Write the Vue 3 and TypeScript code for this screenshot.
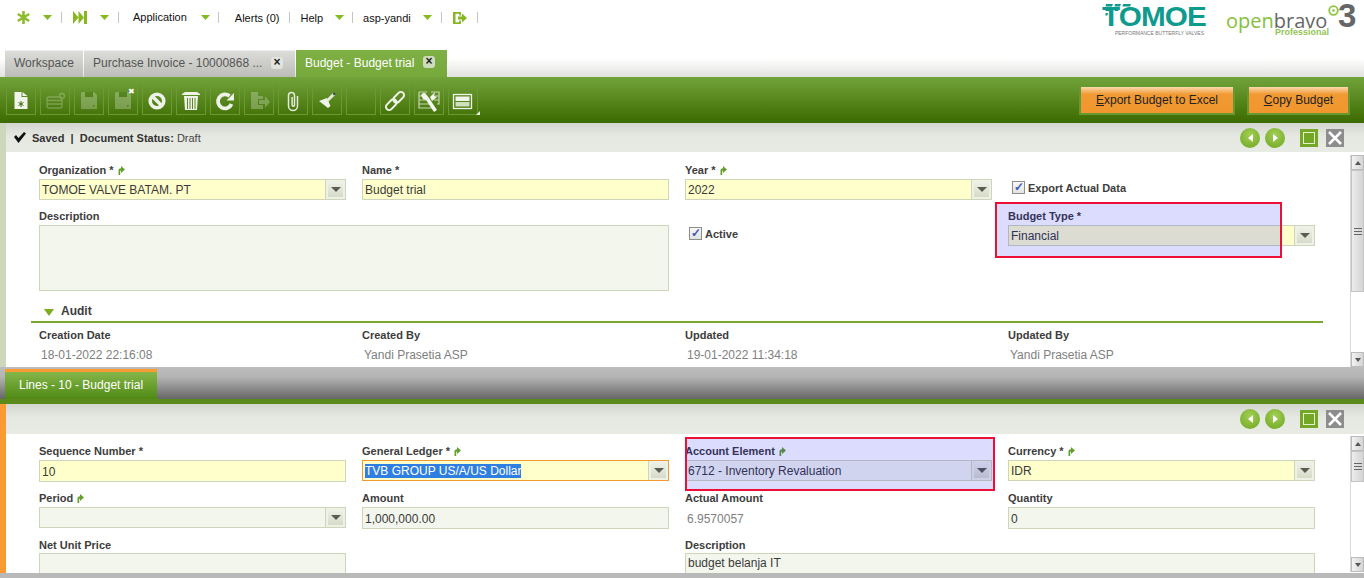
<script setup lang="ts">
interface Field {
  label?: string
  link?: boolean
  value?: string
  kind: 'text' | 'combo' | 'area' | 'plain' | 'check' | 'empty'
  yellow?: boolean
  focus?: boolean
  cls?: string
}

const navCaret = 'M0 0h9l-4.500 5z'
const jumpIcon = 'M0.500 9V4.500C0.500 3 1.700 2.200 3 2.200V0l4 3.500-4 3.500V4.600c-.5 0-.8.4-.8.9V9z'

const tools = [
  { id: 'new', off: false },
  { id: 'newrow', off: true },
  { id: 'save', off: true },
  { id: 'saveclose', off: true },
  { id: 'undo', off: false },
  { id: 'trash', off: false },
  { id: 'refresh', off: false },
  { id: 'export', off: true },
  { id: 'clip', off: false },
  { id: 'stamp', off: false },
  { id: 'blank', off: false },
  { id: 'link', off: false },
  { id: 'tools', off: false },
  { id: 'layout', off: false },
]

const headerFields: Field[] = [
  { label: 'Organization *', link: true, value: 'TOMOE VALVE BATAM. PT', kind: 'combo', yellow: true },
  { label: 'Name *', value: 'Budget trial', kind: 'text', yellow: true },
  { label: 'Year *', link: true, value: '2022', kind: 'combo', yellow: true },
  { label: 'Export Actual Data', kind: 'check' },
  { label: 'Description', kind: 'area', cls: 'span-wide span-tall' },
  { label: 'Active', kind: 'check' },
  { label: 'Budget Type *', value: 'Financial', kind: 'combo', yellow: true },
]

const auditFields: Field[] = [
  { label: 'Creation Date', value: '18-01-2022 22:16:08', kind: 'plain' },
  { label: 'Created By', value: 'Yandi Prasetia ASP', kind: 'plain' },
  { label: 'Updated', value: '19-01-2022 11:34:18', kind: 'plain' },
  { label: 'Updated By', value: 'Yandi Prasetia ASP', kind: 'plain' },
]

const lineFields: Field[] = [
  { label: 'Sequence Number *', value: '10', kind: 'text', yellow: true },
  { label: 'General Ledger *', link: true, value: 'TVB GROUP US/A/US Dollar', kind: 'combo', yellow: true, focus: true },
  { label: 'Account Element', link: true, value: '6712 - Inventory Revaluation', kind: 'combo' },
  { label: 'Currency *', link: true, value: 'IDR', kind: 'combo', yellow: true },
  { label: 'Period', link: true, kind: 'combo' },
  { label: 'Amount', value: '1,000,000.00', kind: 'text' },
  { label: 'Actual Amount', value: '6.9570057', kind: 'plain' },
  { label: 'Quantity', value: '0', kind: 'text' },
  { label: 'Net Unit Price', kind: 'text', cls: 'tight' },
  { kind: 'empty' },
  { label: 'Description', value: 'budget belanja IT', kind: 'text', cls: 'span-wide tight' },
]
</script>

<template>
  <div class="app">
    <header class="top">
      <nav class="nav">
        <svg class="nav-ic" width="13" height="13" viewBox="0 0 13 13"><path d="M6.500 0v13M0.800 3l11.400 7M12.200 3L0.800 10" stroke="#8dbb2c" stroke-width="2.600" fill="none" /></svg>
        <svg class="caret" style="margin-left: 13px" width="9" height="5" viewBox="0 0 9 5"><path :d="navCaret" /></svg>
        <i class="sep" style="margin-left: 9px"></i>
        <svg class="nav-ic" style="margin-left: 11px" width="14" height="13" viewBox="0 0 14 13"><path d="M0 0l5.500 6.500L0 13zM5.500 0l5.500 6.500L5.500 13zM11 0h3v13h-3z" fill="#86b820" /></svg>
        <svg class="caret" style="margin-left: 13px" width="9" height="5" viewBox="0 0 9 5"><path :d="navCaret" /></svg>
        <i class="sep" style="margin-left: 9px"></i>
        <span class="nav-txt app-txt" style="margin-left: 14px">Application</span>
        <svg class="caret" style="margin-left: 14px" width="9" height="5" viewBox="0 0 9 5"><path :d="navCaret" /></svg>
        <i class="sep" style="margin-left: 8px"></i>
        <span class="nav-txt" style="margin-left: 16px">Alerts (0)</span>
        <i class="sep" style="margin-left: 10px"></i>
        <span class="nav-txt" style="margin-left: 10px">Help</span>
        <svg class="caret" style="margin-left: 12px" width="9" height="5" viewBox="0 0 9 5"><path :d="navCaret" /></svg>
        <i class="sep" style="margin-left: 8px"></i>
        <span class="nav-txt" style="margin-left: 10px">asp-yandi</span>
        <svg class="caret" style="margin-left: 12px" width="9" height="5" viewBox="0 0 9 5"><path :d="navCaret" /></svg>
        <i class="sep" style="margin-left: 9px"></i>
        <svg class="nav-ic" style="margin-left: 11px" width="14" height="12" viewBox="0 0 14 12"><path d="M0 0h8v3.500H6.200V1.800H2.500v8.400h3.700V8.500H8V12H0zM5 4.500h4V1.500L14 6 9 10.500V7.500H5z" fill="#86b820" /></svg>
        <i class="sep" style="margin-left: 10px"></i>

        <div class="logos">
          <div class="tomoe">
            <svg class="leaves" width="26" height="12" viewBox="0 0 26 12"><path d="M1 0h7l-1 2.500H0.500zM10 0h6l-1 2.500h-5.500zM18 0h8l-1 2.500h-7.500zM0.500 4.500h5l-1 2.500H0.500zM10 4.500h4l-1 2.500H9.500zM0.500 9h2.500l-.5 2.500h-2z" fill="#0f9a8e" /></svg>
            <span class="tomoe-name">TOMOE</span>
            <span class="tomoe-sub">PERFORMANCE BUTTERFLY VALVES</span>
          </div>
          <div class="obravo">
            <div class="ob-name"><span class="ob-open">open</span><span class="ob-bravo">bravo</span></div>
            <span class="ob-sub">Professional</span>
          </div>
          <div class="ob-three">
            <svg width="11" height="11" viewBox="0 0 11 11"><circle cx="5.500" cy="5.500" r="4.300" fill="none" stroke="#8cc63f" stroke-width="1.800" /><circle cx="5.500" cy="5.500" r="1.300" fill="#8cc63f" /></svg>
            <span>3</span>
          </div>
        </div>
      </nav>

      <div class="tabs">
        <div class="tab" style="width: 78px">Workspace</div>
        <div class="tab" style="width: 211px">
          Purchase Invoice - 10000868 ...
          <span class="tab-x">×</span>
        </div>
        <div class="tab tab-on" style="width: 151px">
          Budget - Budget trial
          <span class="tab-x">×</span>
        </div>
      </div>
    </header>

    <div class="toolbar">
      <div v-for="t in tools" :key="t.id" class="tool" :class="{ off: t.off }">
        <svg width="24" height="24" viewBox="0 0 24 24">
          <g v-if="t.id === 'new'">
            <path d="M5.500 3h7v5h6v12h-13z" fill="#f0f4ea" />
            <path d="M13.500 3l5 4h-5z" fill="#f0f4ea" />
            <path d="M12 12v6M9.500 13.500l5 3M14.500 13.500l-5 3" stroke="#3f6e10" stroke-width="1" />
          </g>
          <g v-else-if="t.id === 'newrow'" fill="none" stroke="#e8efdf" stroke-width="1.300">
            <rect x="4" y="8" width="15" height="11" rx="2" />
            <path d="M4 11.500h15M4 15h15" />
            <circle cx="19" cy="7" r="2.500" />
          </g>
          <g v-else-if="t.id === 'save' || t.id === 'saveclose'">
            <path d="M5 3h12l3 3v14H4V4z" fill="#f0f4ea" />
            <rect x="8" y="3" width="8" height="5" fill="#3f6e10" />
            <rect x="16" y="16" width="1.500" height="1.500" fill="#3f6e10" />
          </g>
          <g v-else-if="t.id === 'undo'">
            <circle cx="12" cy="12" r="6.800" fill="none" stroke="#eef2e8" stroke-width="3.600" />
            <path d="M7 7l10 10" stroke="#eef2e8" stroke-width="3.600" />
          </g>
          <g v-else-if="t.id === 'trash'">
            <path d="M3 5l3-2h12l3 2v1H3z" fill="#eef2e8" />
            <path d="M5 7h14l-1 14H6z" fill="#eef2e8" />
            <path d="M8.500 9v11M11 9v11M13.500 9v11M16 9v11" stroke="#5a8a22" stroke-width="1" />
          </g>
          <g v-else-if="t.id === 'refresh'">
            <path d="M18.500 15a7 7 0 1 1-2-8" fill="none" stroke="#eef2e8" stroke-width="3.800" />
            <path d="M13.500 11.500H21V4z" fill="#eef2e8" />
          </g>
          <g v-else-if="t.id === 'export'" fill="#f0f4ea">
            <path d="M4 3h7v4h5v3h-5v6h5v4H4z" />
            <path d="M12 11h6V7l5 6-5 6v-4h-6z" />
          </g>
          <g v-else-if="t.id === 'clip'">
            <path d="M16.500 7v10a4.500 4.500 0 0 1-9 0V6.500a3 3 0 0 1 6 0V16a1.200 1.200 0 0 1-2.400 0V8" fill="none" stroke="#e4ebda" stroke-width="1.500" />
          </g>
          <g v-else-if="t.id === 'stamp'">
            <path d="M4 12l8-3 3.500 8-2.500 2z" fill="#f0f4ea" />
            <path d="M12 12l7-7" stroke="#e4ebda" stroke-width="3" />
            <path d="M17.500 5l2-1.500 1 1-1.500 2z" fill="#2c3f78" />
          </g>
          <g v-else-if="t.id === 'link'" fill="none" stroke="#eef2e8" stroke-width="2" transform="rotate(-45 12 12)">
            <rect x="0.500" y="8.800" width="12.500" height="6.400" rx="3.200" />
            <rect x="11" y="8.800" width="12.500" height="6.400" rx="3.200" />
          </g>
          <g v-else-if="t.id === 'tools'">
            <path d="M2 3h8M14 3h8v4h-5M8 7H2V3M2 7v4h9M2 11v4h11M2 15v4h14M17 11h5v4h-2M22 7v4" fill="none" stroke="#c6d6b2" stroke-width="1.200" />
            <path d="M8 4l4 5 8 12-3 2-8-12-3-1-2-4 2-2z" fill="#f4f7ef" />
            <path d="M13 8l5-5-1 4 3 1-5 4z" fill="#f4f7ef" />
          </g>
          <g v-else-if="t.id === 'layout'">
            <rect x="2.500" y="5.500" width="18" height="14" fill="none" stroke="#f0f4ea" stroke-width="1.300" />
            <rect x="4.500" y="7.500" width="14" height="4.500" fill="#f0f4ea" />
            <rect x="4.500" y="13" width="14" height="4.500" fill="#cfe0bb" />
          </g>
        </svg>
        <span v-if="t.id === 'saveclose'" class="tool-x">✖</span>
        <i v-if="t.id === 'layout'" class="tool-corner"></i>
      </div>
      <div class="actions">
        <button class="act" style="width: 156px"><u>E</u>xport Budget to Excel</button>
        <button class="act" style="width: 103px"><u>C</u>opy Budget</button>
      </div>
    </div>

    <section class="pane pane-top">
      <div class="status">
        <svg width="12" height="11" viewBox="0 0 12 11"><path d="M0 5l2-2 2.500 3L10 0l2 1.500L4.500 11z" fill="#111" /></svg>
        <span class="status-txt"><b>Saved&nbsp; |&nbsp; Document Status:</b> Draft</span>
        <div class="controls">
          <span class="round"><i class="tri-l"></i></span>
          <span class="round"><i class="tri-r"></i></span>
          <span class="max"></span>
          <span class="close">
            <svg width="18" height="18" viewBox="0 0 18 18"><path d="M3 3l12 12M15 3L3 15" stroke="#fff" stroke-width="2.500" /></svg>
          </span>
        </div>
      </div>
      <div class="body">
        <div class="form">
          <div class="grid grid-head">
            <div v-for="f in headerFields" :key="f.label" class="field" :class="f.cls">
              <label v-if="f.kind === 'check'" class="chk"><span class="box">✓</span>{{ f.label }}</label>
              <template v-else>
                <label class="lbl">{{ f.label }}<svg v-if="f.link" class="jump" width="7" height="9" viewBox="0 0 7 9"><path :d="jumpIcon" /></svg></label>
                <div class="inp" :class="{ yellow: f.yellow, 'inp-area': f.kind === 'area' }">
                  <span class="val">{{ f.value }}</span>
                  <span v-if="f.kind === 'combo'" class="drop"><i></i></span>
                </div>
              </template>
            </div>
          </div>
          <div class="audit">
            <div class="audit-head"><i></i>Audit</div>
            <div class="grid grid-audit">
              <div v-for="f in auditFields" :key="f.label" class="field">
                <label class="lbl">{{ f.label }}</label>
                <span class="plain">{{ f.value }}</span>
              </div>
            </div>
          </div>
        </div>
        <div class="scroll">
          <span class="sb-btn"><i class="up"></i></span>
          <span class="sb-thumb" style="height: 122px"><b></b></span>
          <span class="sb-fill"></span>
          <span class="sb-btn"><i class="down"></i></span>
        </div>
      </div>
      <div class="mark mark-a"></div>
    </section>

    <div class="divider">
      <div class="sub-tab">Lines - 10 - Budget trial</div>
    </div>

    <section class="pane pane-low">
      <div class="status status-low">
        <div class="controls">
          <span class="round"><i class="tri-l"></i></span>
          <span class="round"><i class="tri-r"></i></span>
          <span class="max"></span>
          <span class="close">
            <svg width="18" height="18" viewBox="0 0 18 18"><path d="M3 3l12 12M15 3L3 15" stroke="#fff" stroke-width="2.500" /></svg>
          </span>
        </div>
      </div>
      <div class="body">
        <div class="form">
          <div class="grid grid-lines">
            <div v-for="(f, i) in lineFields" :key="i" class="field" :class="[f.cls, `kind-${f.kind}`]">
              <template v-if="f.kind !== 'empty'">
                <label class="lbl">{{ f.label }}<svg v-if="f.link" class="jump" width="7" height="9" viewBox="0 0 7 9"><path :d="jumpIcon" /></svg></label>
                <span v-if="f.kind === 'plain'" class="plain plain-line">{{ f.value }}</span>
                <div v-else class="inp" :class="{ yellow: f.yellow, focus: f.focus }">
                  <span class="val"><span :class="{ sel: f.focus }">{{ f.value }}</span></span>
                  <span v-if="f.kind === 'combo'" class="drop"><i></i></span>
                </div>
              </template>
            </div>
          </div>
        </div>
        <div class="scroll">
          <span class="sb-btn"><i class="up"></i></span>
          <span class="sb-thumb" style="height: 31px"><b></b></span>
          <span class="sb-fill"></span>
          <span class="sb-btn"><i class="down"></i></span>
        </div>
      </div>
      <div class="mark mark-b"></div>
    </section>

    <div class="foot"></div>
  </div>
</template>

<style>
html,
body {
  margin: 0;
  overflow: hidden;
}
</style>

<style scoped>
.app {
  width: 1364px;
  height: 578px;
  overflow: hidden;
  display: flex;
  flex-direction: column;
  background: #fff;
  font-family: 'Liberation Sans', Arial, sans-serif;
  color: #333;
}
.top {
  height: 77px;
  background: linear-gradient(#fff 0, #fff 58px, #e2e3df 77px);
  display: flex;
  flex-direction: column;
}
.nav {
  height: 50px;
  box-sizing: border-box;
  padding: 0 0 15px 17px;
  display: flex;
  align-items: center;
}
.nav-txt {
  font-size: 11px;
  color: #111;
  padding-top: 1px;
}
.app-txt {
  padding-top: 0;
  margin-top: -1px;
}
.caret {
  fill: #86b820;
  flex: none;
}
.sep {
  width: 1px;
  height: 11px;
  background: #c4c4c4;
  flex: none;
}
.nav-ic {
  flex: none;
}
.logos {
  margin-left: auto;
  display: flex;
  align-self: flex-start;
  height: 50px;
}
.tomoe {
  position: relative;
  width: 101px;
  margin-right: 20px;
  padding-top: 3px;
  box-sizing: border-box;
  display: flex;
  flex-direction: column;
}
.leaves {
  position: absolute;
  left: 0;
  top: 4px;
}
.tomoe-name {
  font-size: 28px;
  line-height: 27px;
  font-weight: 700;
  color: #0f9a8e;
  text-align: right;
  letter-spacing: -0.8px;
  transform: scaleX(1.06);
  transform-origin: right;
}
.tomoe-sub {
  font-size: 5px;
  line-height: 5px;
  color: #777;
  text-align: right;
  white-space: nowrap;
  margin-top: 1px;
  padding-right: 2px;
}
.obravo {
  width: 106px;
  display: flex;
  flex-direction: column;
  padding-top: 13px;
}
.ob-name {
  font-size: 20px;
  line-height: 16px;
  font-family: 'Open Sans', sans-serif;
  font-weight: 400;
  white-space: nowrap;
}
.ob-open {
  color: #86c03c;
}
.ob-bravo {
  color: #666;
}
.ob-sub {
  font-size: 9px;
  line-height: 7px;
  font-weight: 700;
  color: #93c456;
  text-align: right;
  padding-right: 3px;
}
.ob-three {
  width: 32px;
  position: relative;
}
.ob-three svg {
  position: absolute;
  left: -4px;
  top: 5px;
}
.ob-three span {
  position: absolute;
  left: 6px;
  top: 1px;
  font-size: 33px;
  line-height: 30px;
  font-weight: 700;
  color: #666;
}
.tabs {
  height: 27px;
  padding-left: 5px;
  display: flex;
  gap: 1px;
}
.tab {
  box-sizing: border-box;
  padding: 5px 0 0 9px;
  font-size: 12px;
  line-height: 14px;
  color: #555;
  white-space: nowrap;
  position: relative;
  background: linear-gradient(#dcdcd8, #bcbdb8);
  border-top: 1px solid #eee;
}
.tab-on {
  background: linear-gradient(#7fb045, #76a83b);
  color: #fff;
  border-top: none;
  padding-top: 6px;
}
.tab-x {
  position: absolute;
  right: 12px;
  top: 6px;
  width: 12px;
  height: 12px;
  border-radius: 3px;
  background: rgba(235, 235, 230, 0.75);
  color: #222;
  font-size: 12px;
  line-height: 11px;
  font-weight: 700;
  text-align: center;
}
.toolbar {
  height: 46px;
  box-sizing: border-box;
  padding: 9px 14px 0 6px;
  display: flex;
  gap: 4px;
  background: linear-gradient(#72a33a, #3c6a00);
}
.tool {
  width: 30px;
  height: 29px;
  box-sizing: border-box;
  border: 1px solid #6a9a34;
  display: flex;
  align-items: center;
  justify-content: center;
  position: relative;
}
.tool.off svg {
  opacity: 0.28;
}
.tool-x {
  position: absolute;
  right: 2px;
  top: 0;
  color: #fff;
  font-size: 8px;
  line-height: 9px;
}
.tool-corner {
  position: absolute;
  right: -3px;
  bottom: -1px;
  width: 0;
  height: 0;
  border-left: 4px solid transparent;
  border-bottom: 4px solid #e8efdf;
}
.actions {
  margin-left: auto;
  margin-top: -1px;
  display: flex;
  gap: 12px;
}
.act {
  height: 30px;
  box-sizing: border-box;
  border: 2px solid #669a30;
  background: linear-gradient(#fbd9ae, #f19a33 28%, #f0962d);
  font: 12px 'Liberation Sans', Arial, sans-serif;
  color: #222;
  padding: 0;
}
.pane {
  position: relative;
  border-left: 6px solid #cdd7bb;
  display: flex;
  flex-direction: column;
}
.pane-top {
  height: 244px;
}
.pane-low {
  height: 169px;
  border-left-color: #f99a33;
}
.status {
  height: 29px;
  flex: none;
  box-sizing: border-box;
  padding: 0 20px 0 8px;
  display: flex;
  align-items: center;
  background: linear-gradient(#d3d5cf, #e6e8e2 45%, #e8eae4);
}
.status-low {
  height: 30px;
}
.status-txt {
  margin-left: 6px;
  font-size: 11px;
  color: #444;
}
.status-txt b {
  color: #333;
}
.controls {
  margin-left: auto;
  display: flex;
  align-items: center;
  gap: 5px;
}
.round {
  width: 20px;
  height: 20px;
  border-radius: 50%;
  background: radial-gradient(circle at 50% 35%, #a2cf55, #6fa520);
  display: flex;
  align-items: center;
  justify-content: center;
}
.tri-l,
.tri-r {
  width: 0;
  height: 0;
  border-top: 4px solid transparent;
  border-bottom: 4px solid transparent;
}
.tri-l {
  border-right: 5px solid #fff;
}
.tri-r {
  border-left: 5px solid #fff;
}
.max {
  width: 18px;
  height: 18px;
  margin-left: 10px;
  box-sizing: border-box;
  background: #74a726;
  outline: 1px solid #e4f0d0;
  outline-offset: -4px;
}
.close {
  width: 18px;
  height: 18px;
  margin-left: 3px;
  background: #8d8d8d;
  display: block;
}
.close svg {
  display: block;
}
.body {
  flex: 1;
  min-height: 0;
  display: flex;
  overflow: hidden;
}
.form {
  flex: 1;
  min-width: 0;
  overflow: hidden;
}
.grid {
  display: grid;
  grid-template-columns: repeat(4, 307px);
  column-gap: 16px;
  padding-left: 33px;
}
.grid-head {
  padding-top: 11px;
  grid-template-rows: 46px 46px 46px;
}
.grid-audit {
  padding-top: 5px;
}
.grid-lines {
  padding-top: 10px;
  grid-template-rows: 47px 47px 47px;
}
.field {
  min-width: 0;
}
.lbl {
  display: block;
  height: 16px;
  font-size: 11px;
  line-height: 14px;
  font-weight: 700;
  color: #3d3d3d;
  white-space: nowrap;
}
.tight .lbl {
  height: 15px;
}
.jump {
  margin-left: 4px;
  fill: #649f2e;
  vertical-align: -1px;
}
.inp {
  height: 21px;
  box-sizing: border-box;
  border: 1px solid #cdd6bb;
  background: #f3f6ed;
  display: flex;
  align-items: stretch;
  font-size: 12px;
  color: #3a3a3a;
}
.inp.yellow {
  background: #ffffcc;
}
.inp.focus {
  border-color: #f39b32;
}
.grid-lines .inp {
  height: 22px;
}
.grid-lines .kind-combo .inp {
  height: 21px;
}
.val {
  flex: 1;
  min-width: 0;
  padding: 3px 0 0 2px;
  line-height: 14px;
  white-space: nowrap;
  overflow: hidden;
}
.kind-text .val {
  padding-top: 4px;
}
.tight .val {
  padding-top: 2px;
}
.sel {
  background: #2f7fe3;
  color: #fff;
}
.drop {
  width: 20px;
  flex: none;
  box-sizing: border-box;
  border-left: 1px solid #cdd6bb;
  background: #eef1e6;
  padding: 2px;
}
.drop i {
  display: flex;
  height: 100%;
  justify-content: center;
  align-items: center;
  background: linear-gradient(#eef0e8, #d6dbc9);
}
.drop i::after {
  content: '';
  width: 0;
  height: 0;
  border-left: 5px solid transparent;
  border-right: 5px solid transparent;
  border-top: 5px solid #5c5c50;
}
.span-wide {
  grid-column: span 2;
}
.span-tall {
  grid-row: span 2;
}
.inp-area {
  height: 66px;
}
.chk {
  display: flex;
  align-items: center;
  padding: 18px 0 0 4px;
  font-size: 11px;
  font-weight: 700;
  color: #3d3d3d;
}
.box {
  width: 13px;
  height: 13px;
  box-sizing: border-box;
  margin-right: 3px;
  border: 1px solid #8b8f86;
  background: linear-gradient(#f8f8f8, #e2e2e2);
  color: #3c56b8;
  font-size: 12px;
  line-height: 11px;
  text-align: center;
}
.audit {
  margin-top: 3px;
}
.audit-head {
  margin-left: 25px;
  width: 1292px;
  height: 19px;
  box-sizing: border-box;
  padding-left: 13px;
  border-bottom: 2px solid #78a82f;
  display: flex;
  align-items: flex-start;
  gap: 7px;
  font-size: 12px;
  line-height: 14px;
  font-weight: 700;
  color: #3d3d3d;
}
.audit-head i {
  width: 0;
  height: 0;
  margin-top: 5px;
  border-left: 5.500px solid transparent;
  border-right: 5.500px solid transparent;
  border-top: 7px solid #7eab22;
}
.plain {
  display: block;
  margin-top: 4px;
  padding-left: 2px;
  font-size: 12px;
  line-height: 14px;
  color: #808080;
}
.plain-line {
  margin-top: 5px;
}
.scroll {
  width: 14px;
  flex: none;
  margin-top: 2px;
  margin-bottom: 1px;
  display: flex;
  flex-direction: column;
  border-left: 1px solid #d8d8d8;
  box-sizing: border-box;
  background: #fff;
}
.pane-top .scroll {
  margin-top: 3px;
  margin-bottom: 0;
}
.sb-btn {
  height: 15px;
  flex: none;
  box-sizing: border-box;
  border: 1px solid #bbb;
  background: linear-gradient(90deg, #f2f2f2, #d4d4d4);
  display: flex;
  align-items: center;
  justify-content: center;
}
.sb-btn i {
  width: 0;
  height: 0;
  border-left: 3px solid transparent;
  border-right: 3px solid transparent;
}
.up {
  border-bottom: 4px solid #555;
}
.down {
  border-top: 4px solid #555;
}
.sb-thumb {
  flex: none;
  box-sizing: border-box;
  border: 1px solid #c4c4c4;
  background: linear-gradient(90deg, #ececec, #d4d4d4);
  display: flex;
  align-items: center;
  justify-content: center;
}
.sb-thumb b {
  width: 8px;
  height: 7px;
  background: repeating-linear-gradient(#666 0 1px, transparent 1px 3px);
}
.sb-fill {
  flex: 1;
}
.mark {
  position: absolute;
  box-sizing: border-box;
  border: 2px solid #ee0f37;
  background: rgba(0, 0, 255, 0.137);
}
.mark-a {
  left: 989px;
  top: 79px;
  width: 287px;
  height: 56px;
}
.mark-b {
  left: 679px;
  top: 33px;
  width: 310px;
  height: 54px;
}
.divider {
  height: 37px;
  flex: none;
  box-sizing: border-box;
  padding: 2px 0 0 5px;
  background: linear-gradient(#bcbcbc 0, #b4b4b4 10px, #666 32px, #5a8a1c 32px, #5a8a1c 100%);
}
.sub-tab {
  width: 152px;
  height: 30px;
  box-sizing: border-box;
  border-top: 3px solid #f99a33;
  padding: 6px 0 0 14px;
  background: linear-gradient(#86b64a, #4f8a14);
  color: #fff;
  font-size: 12px;
  line-height: 14px;
}
.foot {
  flex: 1;
  background: #b9b9b9;
}
</style>
